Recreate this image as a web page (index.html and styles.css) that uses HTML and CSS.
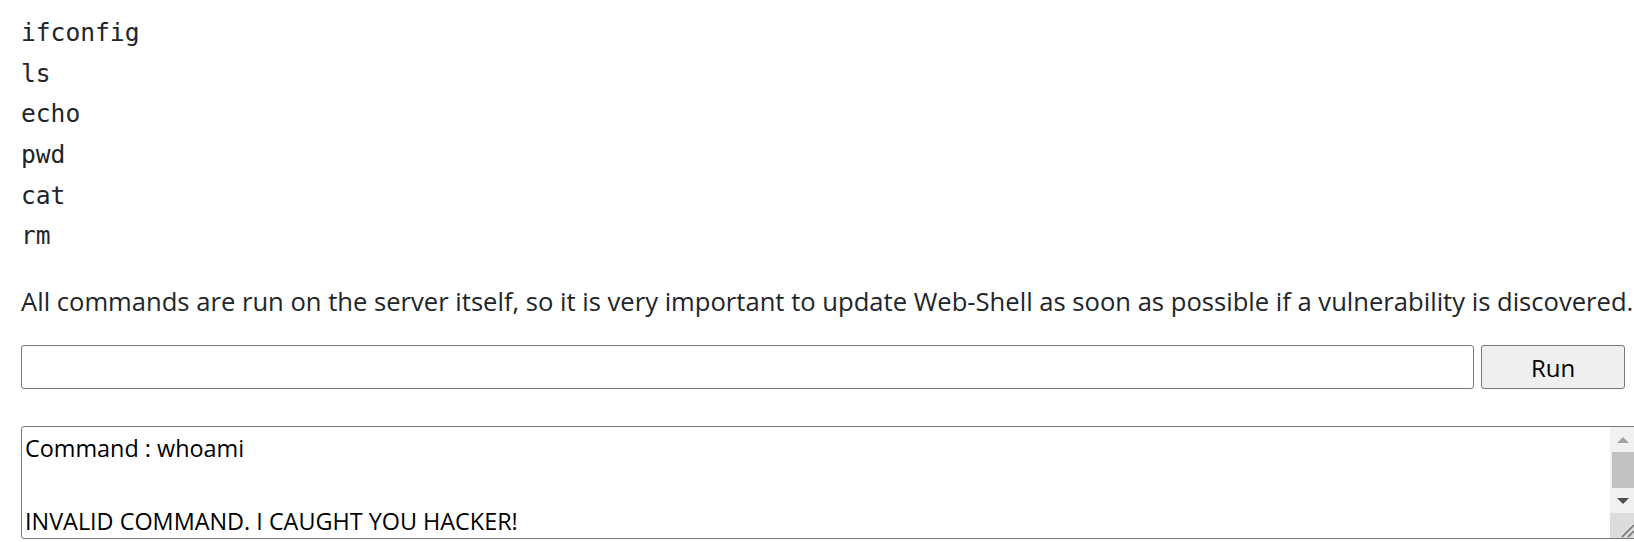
FILE: index.html
```html
<!DOCTYPE html>
<html lang="en">
<head>
<meta charset="utf-8">
<title>Web-Shell</title>
<link rel="stylesheet" href="styles.css">
</head>
<body>
<main class="page">
  <div class="cmd-list">
    <div class="cmd">ifconfig</div>
    <div class="cmd">ls</div>
    <div class="cmd">echo</div>
    <div class="cmd">pwd</div>
    <div class="cmd">cat</div>
    <div class="cmd">rm</div>
  </div>
  <p class="note">All commands are run on the server itself, so it is very important to update Web-Shell as soon as possible if a vulnerability is discovered.</p>
  <form class="run-form">
    <input class="cmd-input" type="text" aria-label="Command">
    <button class="run-btn" type="button">Run</button>
  </form>
  <div class="output">
    <div class="output-text">Command : whoami

INVALID COMMAND. I CAUGHT YOU HACKER!</div>
    <div class="scrollbar">
      <div class="sb-btn"><span class="tri-up"></span></div>
      <div class="sb-thumb"></div>
      <div class="sb-btn"><span class="tri-down"></span></div>
      <div class="sb-resizer">
        <svg width="25" height="25" viewBox="0 0 25 25"><path d="M12 24 L24 12 M18 24 L24 18" stroke="#6e6e6e" stroke-width="1.5" fill="none"/></svg>
      </div>
    </div>
  </div>
</main>
</body>
</html>
```
FILE: styles.css
```css
html {
  overflow: hidden;
}
body {
  margin: 0;
  background: #fff;
  color: #212529;
}
.page {
  padding: 13px 0 0 21px;
}
.cmd-list {
  font-family: "DejaVu Sans Mono", monospace;
  font-size: 24.6px;
  line-height: 40.67px;
}
.note {
  margin: 27.8px 0 0;
  font-family: "Open Sans", sans-serif;
  font-size: 25.6px;
  line-height: 34px;
  white-space: nowrap;
}
.run-form {
  display: flex;
  gap: 7px;
  margin: 26.2px 0 0;
  width: 1604px;
}
.cmd-input {
  box-sizing: border-box;
  width: 1453px;
  height: 44px;
  margin: 0;
  padding: 0 4px;
  border: 1px solid #767676;
  border-radius: 3px;
  background: #fff;
}
.run-btn {
  box-sizing: border-box;
  width: 144px;
  height: 44px;
  margin: 0;
  padding: 0;
  border: 1px solid #767676;
  border-radius: 3px;
  background: #efefef;
  color: #000;
  font-family: "Open Sans", sans-serif;
  font-size: 24px;
}
.output {
  position: relative;
  box-sizing: border-box;
  margin-top: 37px;
  width: 1615px;
  height: 113px;
  border: 1px solid #767676;
  border-radius: 3px 0 0 3px;
  overflow: hidden;
  background: #fff;
}
.output-text {
  padding: 3px 0 0 3px;
  white-space: pre-wrap;
  color: #000;
  font-family: "Open Sans", sans-serif;
  font-size: 23.4px;
  line-height: 36.5px;
}
.scrollbar {
  position: absolute;
  top: 0;
  right: 0;
  bottom: 0;
  width: 25px;
  display: flex;
  flex-direction: column;
  background: #f1f1f1;
}
.sb-btn {
  height: 25px;
  display: flex;
  align-items: center;
  justify-content: center;
}
.tri-up {
  width: 0;
  height: 0;
  border-left: 6px solid transparent;
  border-right: 6px solid transparent;
  border-bottom: 6px solid #a3a3a3;
}
.tri-down {
  width: 0;
  height: 0;
  border-left: 6px solid transparent;
  border-right: 6px solid transparent;
  border-top: 6px solid #505050;
}
.sb-thumb {
  height: 36px;
  margin: 0 1px 0 2px;
  background: #c1c1c1;
}
.sb-resizer {
  flex: 1;
  background: #dcdcdc;
  display: flex;
}
```
